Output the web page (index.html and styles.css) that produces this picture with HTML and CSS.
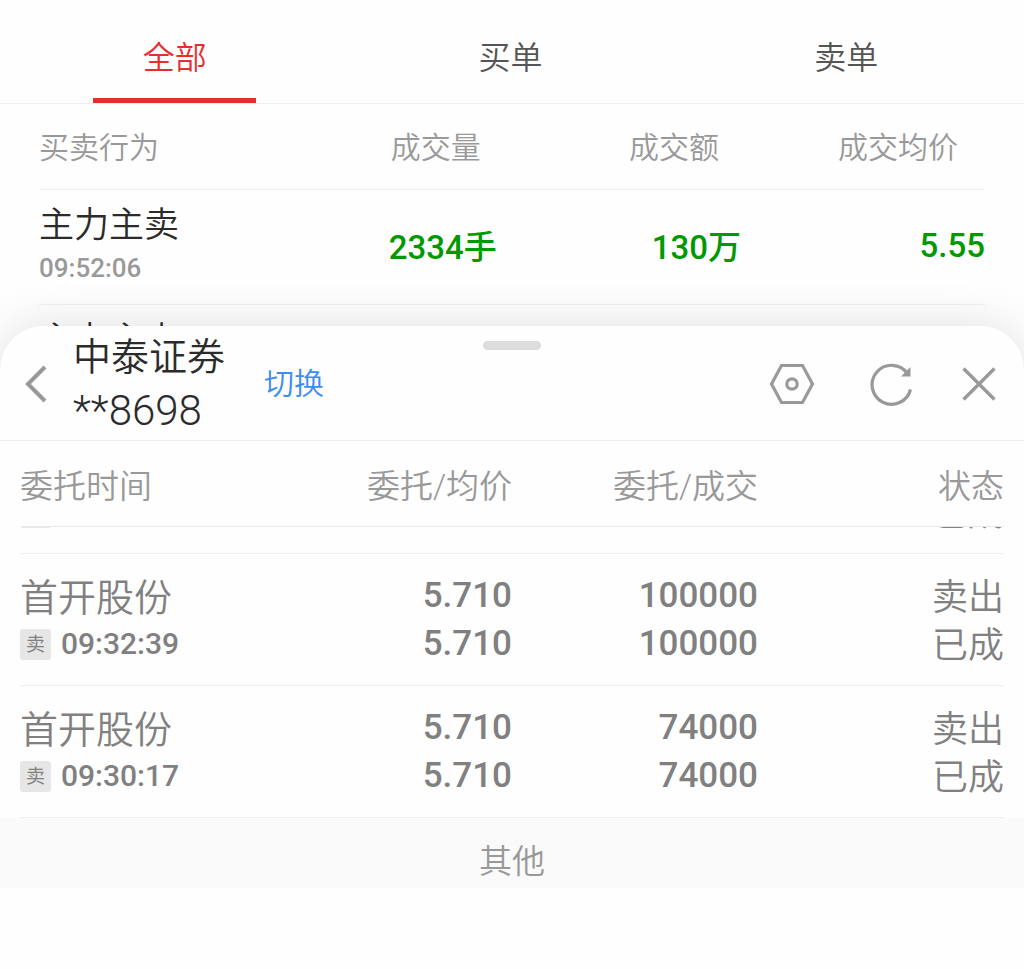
FILE: index.html
```html
<!DOCTYPE html>
<html lang="zh-CN">
<head>
<meta charset="utf-8">
<meta name="viewport" content="width=device-width, initial-scale=1">
<title>成交明细</title>
<link rel="stylesheet" href="styles.css">
</head>
<body>
<main class="app">
  <section class="trades">
    <nav class="tabs">
      <button class="tab tab-active" type="button">全部</button>
      <button class="tab" type="button">买单</button>
      <button class="tab" type="button">卖单</button>
    </nav>
    <div class="trade-list">
      <table class="trade-table">
        <colgroup><col class="col-first"><col class="col-value"><col class="col-value"><col class="col-value"></colgroup>
        <thead>
          <tr><th>买卖行为</th><th class="head-volume">成交量</th><th class="head-amount">成交额</th><th class="head-average">成交均价</th></tr>
        </thead>
        <tbody>
          <tr>
            <td><div class="action">主力主卖</div><div class="action-time">09:52:06</div></td>
            <td class="down">2334手</td><td class="down">130万</td><td class="down">5.55</td>
          </tr>
          <tr>
            <td><div class="action">主力主卖</div></td>
            <td></td><td></td><td></td>
          </tr>
        </tbody>
      </table>
    </div>
  </section>

  <section class="sheet">
    <header class="sheet-head">
      <span class="handle"></span>
      <button class="icon-button back" type="button" aria-label="返回">
        <svg width="24" height="40" viewBox="0 0 24 40"><path d="M21 3 4 20l17 17"/></svg>
      </button>
      <h1 class="broker">中泰证券<span class="account">**8698</span></h1>
      <a class="switch" href="#">切换</a>
      <div class="tools">
        <button class="icon-button" type="button" aria-label="设置">
          <svg width="46" height="46" viewBox="0 0 46 46"><path d="M12.500 4.500h21L43.500 23 33.500 41.500h-21L2.500 23z"/><circle cx="23" cy="23" r="5.200"/></svg>
        </button>
        <button class="icon-button" type="button" aria-label="刷新">
          <svg width="46" height="46" viewBox="0 0 46 46"><path d="M41.500 28.500A19.500 19.500 0 1 1 38.500 12.500"/><path class="solid" d="M41.500 6v9.500H32z"/></svg>
        </button>
        <button class="icon-button" type="button" aria-label="关闭">
          <svg width="36" height="36" viewBox="0 0 36 36"><path d="M2.500 2.500l31 31M33.500 2.500l-31 31"/></svg>
        </button>
      </div>
    </header>

    <div class="orders">
      <table class="order-table order-head">
        <thead>
          <tr><th>委托时间</th><th>委托/均价</th><th>委托/成交</th><th>状态</th></tr>
        </thead>
      </table>
      <div class="order-list">
        <table class="order-table order-body" aria-label="委托记录">
          <tbody>
            <tr>
              <td><div class="stock"></div><div class="time"><span class="badge"></span></div></td>
              <td></td><td></td><td class="state"><br>已成</td>
            </tr>
            <tr>
              <td><div class="stock">首开股份</div><div class="time"><span class="badge">卖</span>09:32:39</div></td>
              <td>5.710<br>5.710</td><td>100000<br>100000</td><td class="state">卖出<br>已成</td>
            </tr>
            <tr>
              <td><div class="stock">首开股份</div><div class="time"><span class="badge">卖</span>09:30:17</div></td>
              <td>5.710<br>5.710</td><td>74000<br>74000</td><td class="state">卖出<br>已成</td>
            </tr>
          </tbody>
        </table>
      </div>
    </div>
    <footer class="other">其他</footer>
  </section>
</main>
</body>
</html>
```

FILE: styles.css
```css
* {
  box-sizing: border-box;
}

body {
  margin: 0;
  background: #fefefe;
  color: #2b2b2b;
  font-family: Roboto, "Noto Sans CJK SC", sans-serif;
}

button {
  padding: 0;
  border: 0;
  background: none;
  font: inherit;
  cursor: pointer;
}

table {
  width: 100%;
  border-collapse: separate;
  border-spacing: 0;
  table-layout: fixed;
}

th,
td {
  padding: 0;
  font-weight: 350;
  text-align: right;
}

th:first-child,
td:first-child {
  text-align: left;
}

.app {
  min-height: 100vh;
  overflow: hidden;
}

.tabs {
  display: grid;
  grid-template-columns: repeat(3, 1fr);
  padding: 0 10px 0 7px;
  border-bottom: 1px solid #efefef;
}

.tab {
  display: flex;
  flex-direction: column;
  align-items: center;
  height: 103px;
  padding-top: 35px;
  font-size: 32px;
  line-height: 46px;
  font-weight: 350;
  color: #555;
}

.tab-active {
  color: #e62e2e;
}

.tab-active::after {
  content: "";
  width: 163px;
  height: 5px;
  margin-top: auto;
  background: #e62e2e;
}

.trade-list {
  padding: 0 39px;
}

.col-first {
  width: 22.6%;
}

.col-value {
  width: 25.8%;
}

.trade-table th {
  height: 86px;
  padding-bottom: 3px;
  border-bottom: 1px solid #f0f0f0;
  color: #999;
  font-size: 30px;
}

.trade-table td {
  height: 115px;
  border-bottom: 1px solid #f0f0f0;
  vertical-align: top;
}

.trade-table .head-volume {
  padding-right: 16px;
}

.trade-table .head-amount {
  padding-right: 22px;
}

.trade-table .head-average {
  padding-right: 27px;
}

.action {
  padding-top: 13px;
  font-size: 35px;
  line-height: 46px;
}

.action-time {
  font-size: 26px;
  line-height: 38px;
  font-weight: 500;
  color: #999;
}

.trade-table .down {
  padding-bottom: 4px;
  color: #090;
  font-size: 33px;
  font-weight: 500;
  vertical-align: middle;
}

.sheet {
  position: relative;
  margin-top: -94px;
  border-radius: 44px 44px 0 0;
  background: #fefefe;
  box-shadow: 0 0 48px rgba(0, 0, 0, 0.12);
  min-height: 644px;
}

.sheet-head {
  position: relative;
  display: flex;
  align-items: center;
  height: 115px;
  padding: 2px 27px 0 24px;
  border-bottom: 1px solid #eee;
}

.handle {
  position: absolute;
  top: 15px;
  left: 50%;
  width: 58px;
  height: 9px;
  margin-left: -29px;
  border-radius: 5px;
  background: #ddd;
}

.icon-button svg {
  display: block;
  fill: none;
  stroke: #999;
  stroke-width: 3.2;
}

.icon-button .solid {
  fill: #999;
  stroke: none;
}

.back svg {
  stroke-width: 4;
}

.broker {
  margin: 0 0 0 25px;
  font-size: 38px;
  line-height: 53px;
  font-weight: 350;
}

.account {
  display: block;
  font-size: 42px;
}

.switch {
  margin-left: 39px;
  color: #3d8cf0;
  font-size: 30px;
  line-height: 44px;
  font-weight: 350;
  text-decoration: none;
}

.tools {
  display: flex;
  align-items: center;
  gap: 54px;
  margin-left: auto;
}

.tools .icon-button:last-child {
  margin-left: -8px;
}

.orders {
  padding: 0 20px;
}

.order-table th {
  height: 86px;
  border-bottom: 1px solid #e8e8e8;
  color: #999;
  font-size: 33px;
}

.order-list {
  display: flex;
  align-items: flex-end;
  height: 291px;
  overflow: hidden;
}

.order-body td {
  padding: 18px 0 17px;
  border-bottom: 1px solid #f0f0f0;
  color: #808080;
  font-size: 35px;
  line-height: 48px;
  font-weight: 500;
  vertical-align: top;
}

.order-body .state {
  padding: 20px 0 15px;
  font-size: 36px;
  font-weight: 350;
}

.stock {
  height: 48px;
  font-size: 38px;
  line-height: 52px;
  font-weight: 350;
}

.time {
  display: flex;
  align-items: center;
  gap: 10px;
  height: 48px;
  font-size: 30px;
}

.badge {
  width: 31px;
  height: 31px;
  border-radius: 3px;
  background: #e6e6e6;
  font-size: 19px;
  line-height: 31px;
  font-weight: 400;
  text-align: center;
}

.other {
  padding: 20px 0 2px;
  background: #fafafa;
  color: #999;
  font-size: 33px;
  line-height: 48px;
  font-weight: 350;
  text-align: center;
}
```
